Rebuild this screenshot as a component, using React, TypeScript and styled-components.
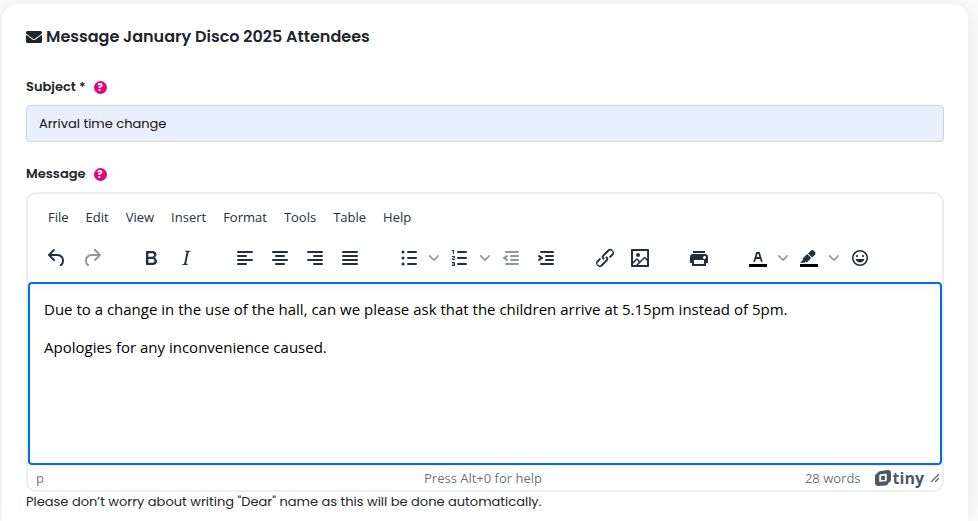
import React from 'react';
import styled, { createGlobalStyle } from 'styled-components';

const brandFont = 'Poppins, Inter, "Liberation Sans", sans-serif';
const editorFont = '"Segoe UI", "Open Sans", "Noto Sans", sans-serif';
const ink = '#222f3e';

const GlobalStyle = createGlobalStyle`
  *, *::before, *::after { box-sizing: border-box; }
  body {
    margin: 0;
    background: #fbfbfb;
    color: #212529;
    font-family: ${brandFont};
    font-size: 13px;
  }
`;

const Page = styled.div`
  display: flex;
  min-height: 100vh;
  padding: 4px 10px 0 2px;
  overflow: hidden;
`;

const Card = styled.main`
  flex: 1;
  min-width: 0;
  padding: 20px 24px 8px;
  background: #fff;
  border-radius: 16px 16px 0 0;
  box-shadow: 0 0 20px rgba(0, 0, 0, 0.08);
`;

const Title = styled.h1`
  display: flex;
  align-items: center;
  gap: 4px;
  margin: 0 0 27px;
  font-size: 16px;
  font-weight: 600;
  line-height: 26px;
`;

const Field = styled.div`
  display: flex;
  flex-direction: column;
  margin-bottom: 22px;
`;

const LabelRow = styled.div`
  display: flex;
  align-items: center;
  gap: 8px;
  height: 20px;
  margin-bottom: 8px;
`;

const FieldLabel = styled.label`
  font-size: 13px;
  font-weight: 600;
  line-height: 20px;
`;

const HelpButton = styled.button`
  display: flex;
  align-items: center;
  justify-content: center;
  width: 13px;
  height: 13px;
  padding: 0;
  border: 0;
  border-radius: 50%;
  background: #e6007e;
  color: #fff;
  font: 700 10px/13px ${brandFont};
  cursor: help;
`;

const TextInput = styled.input`
  width: 100%;
  height: 37px;
  padding: 6px 12px;
  border: 1px solid #ced4da;
  border-radius: 4px;
  background: #e8f0fe;
  color: #111;
  font: 400 13px/20px ${brandFont};
`;

const Editor = styled.div`
  border: 2px solid #eee;
  border-radius: 10px;
  background: #fff;
  color: ${ink};
  font-family: ${editorFont};
  overflow: hidden;
`;

const MenuBar = styled.div`
  display: flex;
  align-items: center;
  gap: 1px;
  height: 46px;
  padding: 0 12px;
`;

const MenuButton = styled.button`
  height: 28px;
  padding: 0 8px;
  border: 0;
  border-radius: 3px;
  background: transparent;
  color: ${ink};
  font: 400 13px/28px ${editorFont};
`;

const Toolbar = styled.div`
  display: flex;
  flex-wrap: wrap;
  padding-bottom: 7px;
`;

const ToolGroup = styled.div`
  display: flex;
  gap: 1px;
  padding: 0 13px 0 12px;
`;

const SplitButton = styled.div`
  display: flex;
`;

const ToolButton = styled.button<{ $narrow?: boolean }>`
  display: flex;
  align-items: center;
  justify-content: center;
  width: ${(p) => (p.$narrow ? 16 : 34)}px;
  height: 35px;
  padding: 0;
  border: 0;
  border-radius: 3px;
  background: transparent;
  color: ${ink};

  svg { fill: currentColor; opacity: ${(p) => (p.$narrow ? 0.5 : 1)}; }
  &:disabled { color: ${ink}; }
  &:disabled svg { opacity: 0.5; }
`;

const EditArea = styled.div`
  min-height: 183px;
  padding: 14px;
  border: 2px solid #006ce7;
  border-radius: 4px;
  background: linear-gradient(#f9f9f9, #fff 10px);
  color: #000;
  font-size: 15px;
  line-height: 22px;
  outline: none;

  p { margin: 0 0 16px; }
`;

const StatusBar = styled.div`
  display: flex;
  align-items: center;
  height: 25px;
  padding: 0 2px 0 8px;
  border-top: 1px solid #eee;
  color: rgba(34, 47, 62, 0.7);
  font-size: 13px;
`;

const StatusText = styled.div`
  flex: 1;
  display: grid;
  grid-template-columns: 1fr auto 1fr;
  align-items: center;
`;

const StatusEnd = styled.div`
  display: flex;
  align-items: center;
  justify-content: flex-end;
`;

const BrandLink = styled.a`
  display: flex;
  align-items: center;
  gap: 2px;
  margin: 0 6px 0 14px;
  color: #4d5865;
  font: 700 16px/20px "Open Sans", sans-serif;
  text-decoration: none;
`;

const Hint = styled.p`
  margin: 0;
  font-size: 13px;
  line-height: 20px;
`;

const icons = {
  undo: 'M6.4 8H12c3.7 0 6.2 2 6.8 5.1.6 2.7-.4 5.6-2.3 6.8a1 1 0 0 1-1-1.8c1.1-.6 1.8-2.7 1.4-4.6-.5-2.1-2.1-3.5-4.9-3.5H6.4l3.3 3.3a1 1 0 1 1-1.4 1.4l-5-5a1 1 0 0 1 0-1.4l5-5a1 1 0 0 1 1.4 1.4L6.4 8Z',
  redo: 'M17.6 10H12c-2.8 0-4.4 1.4-4.9 3.5-.4 2 .3 4 1.4 4.6a1 1 0 1 1-1 1.8c-2-1.2-2.9-4.1-2.3-6.8.6-3 3-5.1 6.8-5.1h5.6l-3.3-3.3a1 1 0 1 1 1.4-1.4l5 5a1 1 0 0 1 0 1.4l-5 5a1 1 0 0 1-1.4-1.4l3.3-3.3Z',
  bold: 'M7.8 19c-.3 0-.5 0-.6-.2l-.2-.5V5.7c0-.2 0-.4.2-.5l.6-.2h5c1.5 0 2.7.3 3.5 1 .7.6 1.1 1.4 1.1 2.5a3 3 0 0 1-.6 1.9c-.4.6-1 1-1.6 1.2.4.1.9.3 1.3.6s.8.7 1 1.2c.4.4.5 1 .5 1.6 0 1.3-.4 2.3-1.3 3-.8.7-2.1 1-3.8 1H7.8Zm5-8.3c.6 0 1.2-.1 1.6-.5.4-.3.6-.7.6-1.3 0-1.1-.8-1.7-2.3-1.7H9.3v3.5h3.4Zm.5 6c.7 0 1.3-.1 1.7-.4.4-.4.6-.9.6-1.5s-.2-1-.7-1.4c-.4-.3-1-.4-2-.4H9.4v3.8h4Z',
  italic: 'm16.7 4.7-.1.9h-.3c-.6 0-1 0-1.4.3-.3.3-.4.6-.5 1.1l-2.1 9.8v.6c0 .5.4.8 1.4.8h.2l-.2.8H8l.2-.8h.2c1.1 0 1.8-.5 2-1.5l2-9.8.1-.5c0-.6-.4-.8-1.4-.8h-.3l.2-.9h5.8Z',
  alignLeft: 'M5 5h14a1 1 0 0 1 0 2H5a1 1 0 1 1 0-2Zm0 4h8a1 1 0 0 1 0 2H5a1 1 0 1 1 0-2Zm0 8h8a1 1 0 0 1 0 2H5a1 1 0 0 1 0-2Zm0-4h14a1 1 0 0 1 0 2H5a1 1 0 0 1 0-2Z',
  alignCenter: 'M5 5h14a1 1 0 0 1 0 2H5a1 1 0 1 1 0-2Zm3 4h8a1 1 0 0 1 0 2H8a1 1 0 1 1 0-2Zm0 8h8a1 1 0 0 1 0 2H8a1 1 0 0 1 0-2Zm-3-4h14a1 1 0 0 1 0 2H5a1 1 0 0 1 0-2Z',
  alignRight: 'M5 5h14a1 1 0 0 1 0 2H5a1 1 0 1 1 0-2Zm6 4h8a1 1 0 0 1 0 2h-8a1 1 0 0 1 0-2Zm0 8h8a1 1 0 0 1 0 2h-8a1 1 0 0 1 0-2Zm-6-4h14a1 1 0 0 1 0 2H5a1 1 0 0 1 0-2Z',
  justify: 'M5 5h14a1 1 0 0 1 0 2H5a1 1 0 1 1 0-2Zm0 4h14a1 1 0 0 1 0 2H5a1 1 0 1 1 0-2Zm0 4h14a1 1 0 0 1 0 2H5a1 1 0 0 1 0-2Zm0 4h14a1 1 0 0 1 0 2H5a1 1 0 0 1 0-2Z',
  bullets: 'M11 5h8a1 1 0 0 1 0 2h-8a1 1 0 0 1 0-2Zm0 6h8a1 1 0 0 1 0 2h-8a1 1 0 0 1 0-2Zm0 6h8a1 1 0 0 1 0 2h-8a1 1 0 0 1 0-2ZM4.5 6a1.5 1.5 0 1 1 3 0 1.5 1.5 0 0 1-3 0Zm0 6a1.5 1.5 0 1 1 3 0 1.5 1.5 0 0 1-3 0Zm0 6a1.5 1.5 0 1 1 3 0 1.5 1.5 0 0 1-3 0Z',
  numbers: 'M10 17h8a1 1 0 0 1 0 2h-8a1 1 0 0 1 0-2Zm0-6h8a1 1 0 0 1 0 2h-8a1 1 0 0 1 0-2Zm0-6h8a1 1 0 0 1 0 2h-8a1 1 0 1 1 0-2ZM6 4v3.5c0 .3-.2.5-.5.5a.5.5 0 0 1-.5-.5V5h-.5a.5.5 0 0 1 0-1H6Zm-1 8.8.2.2h1.3c.3 0 .5.2.5.5s-.2.5-.5.5H4.9a1 1 0 0 1-.9-1V13c0-.4.3-.8.6-1l1.2-.4.2-.3a.2.2 0 0 0-.2-.2H4.5a.5.5 0 0 1-.5-.5c0-.3.2-.5.5-.5h1.6c.5 0 .9.4.9 1v.1c0 .4-.3.8-.6 1l-1.2.4-.2.3ZM7 17v2c0 .6-.4 1-1 1H4.5a.5.5 0 0 1 0-1h1.2c.2 0 .3-.1.3-.3 0-.2-.1-.3-.3-.3H4.4a.4.4 0 1 1 0-.8h1.3c.2 0 .3-.1.3-.3 0-.2-.1-.3-.3-.3H4.5a.5.5 0 1 1 0-1H6c.6 0 1 .4 1 1Z',
  outdent: 'M7 5h12a1 1 0 0 1 0 2H7a1 1 0 1 1 0-2Zm5 4h7a1 1 0 0 1 0 2h-7a1 1 0 0 1 0-2Zm0 4h7a1 1 0 0 1 0 2h-7a1 1 0 0 1 0-2Zm-5 4h12a1 1 0 0 1 0 2H7a1 1 0 0 1 0-2Zm1.6-3.8a1 1 0 0 1-1.2 1.6l-3-2a1 1 0 0 1 0-1.6l3-2a1 1 0 0 1 1.2 1.6L6.8 12l1.8 1.2Z',
  indent: 'M7 5h12a1 1 0 0 1 0 2H7a1 1 0 1 1 0-2Zm5 4h7a1 1 0 0 1 0 2h-7a1 1 0 0 1 0-2Zm0 4h7a1 1 0 0 1 0 2h-7a1 1 0 0 1 0-2Zm-5 4h12a1 1 0 0 1 0 2H7a1 1 0 0 1 0-2Zm-2.6-3.8L6.2 12l-1.8-1.2a1 1 0 0 1 1.2-1.6l3 2a1 1 0 0 1 0 1.6l-3 2a1 1 0 1 1-1.2-1.6Z',
  link: 'M6.2 12.3a1 1 0 0 1 1.4 1.4l-2 2a2 2 0 1 0 2.6 2.8l4.8-4.8a1 1 0 0 0 0-1.4 1 1 0 1 1 1.4-1.3 2.9 2.9 0 0 1 0 4L9.6 20a3.9 3.9 0 0 1-5.5-5.5l2-2Zm11.6-.6a1 1 0 0 1-1.4-1.4l2-2a2 2 0 1 0-2.6-2.8L11 10.3a1 1 0 0 0 0 1.4A1 1 0 1 1 9.6 13a2.9 2.9 0 0 1 0-4L14.4 4a3.9 3.9 0 0 1 5.5 5.5l-2 2Z',
  image: 'm5 15.7 3.3-3.2c.3-.3.7-.3 1 0L12 15l4.1-4c.3-.4.8-.4 1 0l2 1.9V5H5v10.7ZM5 18V19h3l2.8-2.9-2-2L5 17.9Zm14-3-2.5-2.4-6.4 6.5H19v-4ZM4 3h16c.6 0 1 .4 1 1v16c0 .6-.4 1-1 1H4a1 1 0 0 1-1-1V4c0-.6.4-1 1-1Zm6 8a2 2 0 1 0 0-4 2 2 0 0 0 0 4Z',
  print: 'M18 8H6a3 3 0 0 0-3 3v6h2v3h14v-3h2v-6a3 3 0 0 0-3-3Zm-1 10H7v-4h10v4Zm.5-5c-.8 0-1.5-.7-1.5-1.5s.7-1.5 1.5-1.5 1.5.7 1.5 1.5-.7 1.5-1.5 1.5Zm.5-8H6v2h12V5Z',
  textColor: 'M8.7 16h-.8a.5.5 0 0 1-.5-.6l2.7-9c.1-.3.3-.4.5-.4h2.8c.2 0 .4.1.5.4l2.7 9a.5.5 0 0 1-.5.6h-.8a.5.5 0 0 1-.4-.4l-.7-2.2c0-.3-.3-.4-.5-.4h-3.4c-.2 0-.4.1-.5.4l-.7 2.2c0 .3-.2.4-.4.4Zm2.6-7.6-.6 2a.5.5 0 0 0 .5.6h1.6a.5.5 0 0 0 .5-.6l-.6-2c0-.3-.3-.4-.5-.4h-.4c-.2 0-.4.1-.5.4Z',
  highlight: 'M7.7 16.7H3l3.3-3.3-.7-.8L10.2 8l4 4.1-4 4.2c-.2.2-.6.2-.8 0l-.6-.7-1.1 1.1Zm5-7.5L11 7.4l3-2.9a2 2 0 0 1 2.6 0L18 6c.7.7.7 2 0 2.7l-2.9 2.9-1.8-1.8-.5-.6',
  emoji: 'M9 11c.6 0 1-.4 1-1s-.4-1-1-1a1 1 0 0 0-1 1c0 .6.4 1 1 1Zm6 0c.6 0 1-.4 1-1s-.4-1-1-1a1 1 0 0 0-1 1c0 .6.4 1 1 1Zm-3 5.5c2.1 0 4-1.5 4.4-3.5H7.6c.5 2 2.3 3.5 4.4 3.5ZM12 4a8 8 0 1 0 0 16 8 8 0 0 0 0-16Zm0 14.5a6.5 6.5 0 1 1 0-13 6.5 6.5 0 0 1 0 13Z',
};

type Tool = {
  icon: keyof typeof icons;
  label: string;
  menu?: boolean;
  disabled?: boolean;
  swatch?: boolean;
};

const toolGroups: Tool[][] = [
  [{ icon: 'undo', label: 'Undo' }, { icon: 'redo', label: 'Redo', disabled: true }],
  [{ icon: 'bold', label: 'Bold' }, { icon: 'italic', label: 'Italic' }],
  [
    { icon: 'alignLeft', label: 'Align left' },
    { icon: 'alignCenter', label: 'Align center' },
    { icon: 'alignRight', label: 'Align right' },
    { icon: 'justify', label: 'Justify' },
  ],
  [
    { icon: 'bullets', label: 'Bullet list', menu: true },
    { icon: 'numbers', label: 'Numbered list', menu: true },
    { icon: 'outdent', label: 'Decrease indent', disabled: true },
    { icon: 'indent', label: 'Increase indent' },
  ],
  [{ icon: 'link', label: 'Insert link' }, { icon: 'image', label: 'Insert image' }],
  [{ icon: 'print', label: 'Print' }],
  [
    { icon: 'textColor', label: 'Text color', menu: true, swatch: true },
    { icon: 'highlight', label: 'Background color', menu: true, swatch: true },
    { icon: 'emoji', label: 'Emojis' },
  ],
];

const menus = ['File', 'Edit', 'View', 'Insert', 'Format', 'Tools', 'Table', 'Help'];

function ToolItem({ icon, label, menu, disabled, swatch }: Tool) {
  const main = (
    <ToolButton type="button" aria-label={label} disabled={disabled}>
      <svg width="24" height="24" viewBox="0 0 24 24" aria-hidden="true">
        {swatch && <path d="M3 18h18v3H3z" fill="#000" />}
        <path d={icons[icon]} fillRule="evenodd" />
      </svg>
    </ToolButton>
  );
  if (!menu) return main;
  return (
    <SplitButton>
      {main}
      <ToolButton type="button" $narrow aria-label={`${label} menu`}>
        <svg width="10" height="10" viewBox="0 0 10 10" aria-hidden="true">
          <path d="M8.7 2.2c.3-.3.8-.3 1 0 .4.4.4.9 0 1.2L5.7 7.8c-.3.3-.9.3-1.2 0L.2 3.4a.8.8 0 0 1 0-1.2c.3-.3.8-.3 1.1 0L5 6l3.7-3.8Z" />
        </svg>
      </ToolButton>
    </SplitButton>
  );
}

export default function App() {
  return (
    <>
      <GlobalStyle />
      <Page>
        <Card>
          <Title>
            <svg width="16" height="16" viewBox="0 0 512 512" fill="currentColor" aria-hidden="true">
              <path d="M502.3 190.8c3.9-3.1 9.7-.2 9.7 4.7V400c0 26.5-21.5 48-48 48H48c-26.5 0-48-21.5-48-48V195.6c0-5 5.7-7.8 9.7-4.7 22.4 17.4 52.1 39.5 154.1 113.6 21.1 15.4 56.7 47.8 92.2 47.6 35.7.3 72-32.8 92.3-47.6 102-74.1 131.6-96.3 154-113.7zM256 320c23.2.4 56.6-29.2 73.4-41.4 132.7-96.3 142.8-104.7 173.4-128.7 5.8-4.5 9.2-11.5 9.2-18.9v-19c0-26.5-21.5-48-48-48H48c-26.5 0-48 21.5-48 48v19c0 7.4 3.4 14.3 9.2 18.9 30.6 23.9 40.7 32.4 173.4 128.7 16.8 12.2 50.2 41.8 73.4 41.4z" />
            </svg>
            Message January Disco 2025 Attendees
          </Title>

          <Field>
            <LabelRow>
              <FieldLabel htmlFor="subject">Subject *</FieldLabel>
              <HelpButton type="button" aria-label="Help with subject">?</HelpButton>
            </LabelRow>
            <TextInput id="subject" type="text" defaultValue="Arrival time change" required />
          </Field>

          <LabelRow>
            <FieldLabel id="message-label" htmlFor="message">Message</FieldLabel>
            <HelpButton type="button" aria-label="Help with message">?</HelpButton>
          </LabelRow>
          <Editor>
            <MenuBar role="menubar">
              {menus.map((name) => (
                <MenuButton key={name} type="button" role="menuitem">{name}</MenuButton>
              ))}
            </MenuBar>
            <Toolbar role="toolbar" aria-label="Formatting">
              {toolGroups.map((group) => (
                <ToolGroup key={group[0].icon}>
                  {group.map((tool) => <ToolItem key={tool.icon} {...tool} />)}
                </ToolGroup>
              ))}
            </Toolbar>
            <EditArea
              id="message"
              role="textbox"
              aria-multiline="true"
              aria-labelledby="message-label"
              contentEditable
              suppressContentEditableWarning
              spellCheck={false}
            >
              <p>Due to a change in the use of the hall, can we please ask that the children arrive at 5.15pm instead of 5pm.</p>
              <p>Apologies for any inconvenience caused.</p>
            </EditArea>
            <StatusBar>
              <StatusText>
                <span>p</span>
                <span>Press Alt+0 for help</span>
                <StatusEnd>
                  <span>28 words</span>
                  <BrandLink href="#tiny">
                    <svg width="16" height="16" viewBox="0 0 16 16" fill="currentColor" aria-hidden="true">
                      <path
                        fillRule="evenodd"
                        d="M6 .9 12.700.1C14.600-.1 16 1.200 16 3v6.600c0 1.500-.9 2.600-2.300 3.100-.4 1.500-1.600 2.500-3.100 2.700l-7.200.6C1.500 16.200 0 14.800 0 13V6.400c0-1.500.9-2.700 2.300-3.100C2.800 1.900 4.300 1.100 6 .9ZM5.400 4.200c-.7.1-1.100.5-1.100 1.200v5.500c0 .6.4 1 1 .9l5.400-.5c.7-.1 1.100-.5 1.100-1.200V4.600c0-.6-.4-1-1-.9Zm.8 1.900 3.700-.4v4.200l-3.700.4Z"
                      />
                    </svg>
                    tiny
                  </BrandLink>
                </StatusEnd>
              </StatusText>
              <svg width="10" height="10" viewBox="0 0 10 10" fill="currentColor" aria-hidden="true">
                <path d="M8.1 1.1A.5.5 0 1 1 9 2l-7 7A.5.5 0 1 1 1 8l7-7ZM8.1 5.1A.5.5 0 1 1 9 6l-3 3A.5.5 0 1 1 5 8l3-3Z" />
              </svg>
            </StatusBar>
          </Editor>
          <Hint>Please don’t worry about writing "Dear" name as this will be done automatically.</Hint>
        </Card>
      </Page>
    </>
  );
}
